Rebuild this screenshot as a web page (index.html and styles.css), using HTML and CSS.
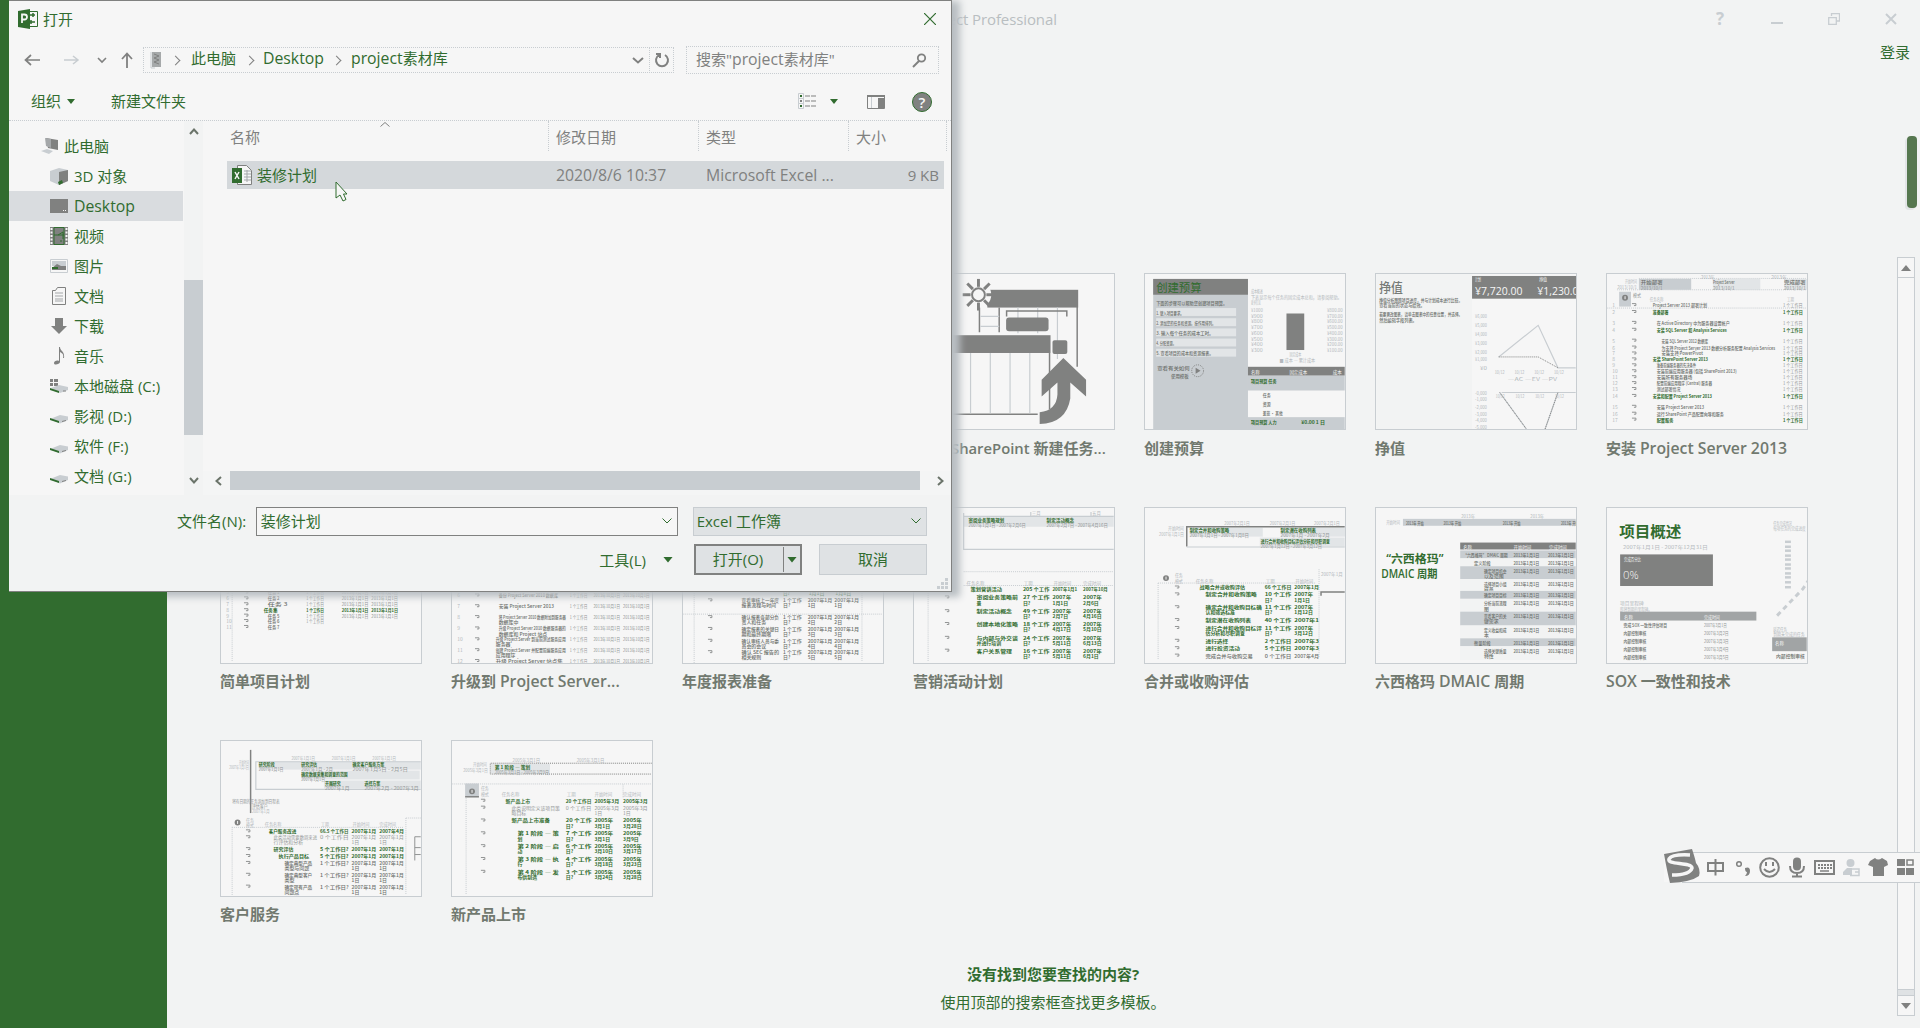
FILE: index.html
```html
<!DOCTYPE html>
<html lang="zh-CN">
<head>
<meta charset="utf-8">
<title>Project Professional</title>
<link rel="stylesheet" href="styles.css">
</head>
<body>
<div class="app">
  <aside class="rail"></aside>
  <main class="main">
    <header class="titlebar">
      <span class="app-title">Project Professional</span>
      <div class="win-buttons">
        <b class="help">?</b>
        <svg width="12" height="12"><path d="M0 10h12" stroke-width="2"/></svg>
        <svg width="12" height="12"><path d="M3.5 3V.7h8V8H8.500M.7 4.700h7.600v6.600H.7z" stroke-width="1.300"/></svg>
        <svg width="12" height="12"><path d="M1 1l10 10M11 1L1 11" stroke-width="2"/></svg>
      </div>
    </header>
    <div class="account"><span>登录</span></div>
    <div class="page-thumb"></div>
    <div class="gallery-area">
      <section class="gallery">
        <div class="grid">
          <article class="card first"><svg class="thumb" data-thumb="sharepoint"></svg><h3 class="tail"><span class="la">SharePoint</span> 新建任务...</h3></article>
          <article class="card"><svg class="thumb" data-thumb="budget"></svg><h3>创建预算</h3></article>
          <article class="card"><svg class="thumb" data-thumb="earned"></svg><h3>挣值</h3></article>
          <article class="card"><svg class="thumb" data-thumb="install"></svg><h3>安装 <span class="la">Project Server 2013</span></h3></article>
          <article class="card"><svg class="thumb" data-thumb="simple"></svg><h3>简单项目计划</h3></article>
          <article class="card"><svg class="thumb" data-thumb="upgrade"></svg><h3>升级到 <span class="la">Project Server...</span></h3></article>
          <article class="card"><svg class="thumb" data-thumb="annual"></svg><h3>年度报表准备</h3></article>
          <article class="card"><svg class="thumb" data-thumb="marketing"></svg><h3>营销活动计划</h3></article>
          <article class="card"><svg class="thumb" data-thumb="merger"></svg><h3>合并或收购评估</h3></article>
          <article class="card"><svg class="thumb" data-thumb="sigma"></svg><h3>六西格玛 <span class="la">DMAIC</span> 周期</h3></article>
          <article class="card"><svg class="thumb" data-thumb="sox"></svg><h3><span class="la">SOX</span> 一致性和技术</h3></article>
          <article class="card"><svg class="thumb" data-thumb="service"></svg><h3>客户服务</h3></article>
          <article class="card"><svg class="thumb" data-thumb="product"></svg><h3>新产品上市</h3></article>
        </div>
        <footer class="hint"><strong>没有找到您要查找的内容?</strong><span>使用顶部的搜索框查找更多模板。</span></footer>
      </section>
      <div class="scroll">
        <span class="sbtn"><svg width="10" height="6"><path d="M0 6L5 0l5 6z"/></svg></span>
        <span class="strack"></span>
        <span class="sgap"></span>
        <span class="sbtn"><svg width="10" height="6"><path d="M0 0h10L5 6z"/></svg></span>
      </div>
    </div>
  </main>
</div>

<section class="dialog">
  <header class="d-title">
    <svg width="21" height="20" viewBox="0 0 21 20"><path d="M11 2.500h8.500v15H11" fill="#f6f6f6" stroke="#316c2f"/><path d="M12 6h5M15 4v4M12 13h5M13 11v4" stroke="#316c2f" stroke-width="1.500"/><path d="M0 2L12 0v20L0 18z" fill="#316c2f"/><path d="M4 14V5.500h2.500a2.300 2.300 0 010 5H4" fill="none" stroke="#f6f6f6" stroke-width="1.800"/></svg>
    <span>打开</span>
    <svg class="close" width="12" height="12"><path d="M0 0l12 12M12 0L0 12" stroke="#316c2f" stroke-width="1.200"/></svg>
  </header>
  <div class="d-nav">
    <svg class="arrows" width="125" height="20" fill="none" stroke="#808180"><path d="M16 10H2M7 5l-5.500 5L7 15" stroke-width="1.700"/><path d="M40 10h14M49 6l5 4-5 4" stroke="#c8cdd1" stroke-width="1.500"/><path d="M74 8l4 4 4-4" stroke-width="1.600"/><path d="M103 18V4M98 9l5-5.500L108 9" stroke-width="1.800"/></svg>
    <div class="address">
      <svg width="14" height="18"><path d="M2 1h9v15H2z" fill="#a6a9aa"/><path d="M4 3l5 2-5 2 5 2-5 2 5 2" stroke="#808180" fill="none"/><path d="M1 1v16h4" stroke="#c8cdd1" fill="none"/></svg>
      <i class="chev c1"></i><span class="a1">此电脑</span>
      <i class="chev c2"></i><span class="a2 la">Desktop</span>
      <i class="chev c3"></i><span><span class="la">project</span>素材库</span>
      <svg class="drop" width="12" height="7" fill="none" stroke="#808180" stroke-width="2"><path d="M1 1l5 4.500L11 1"/></svg>
      <span class="refresh"><svg width="16" height="16" fill="none" stroke="#808180" stroke-width="2"><path d="M5 3a6 6 0 1 0 6 0M2 2h4v4"/></svg></span>
    </div>
    <div class="search"><span>搜索"<span class="la">project</span>素材库"</span><svg width="15" height="15" fill="none" stroke="#808180"><circle cx="9.500" cy="5" r="3.700" stroke-width="1.800"/><path d="M7 8l-6 6" stroke-width="2"/></svg></div>
  </div>
  <div class="d-tools">
    <span>组织</span><i class="tri"></i><span class="newf">新建文件夹</span>
    <svg class="view" width="20" height="17"><path d="M.5.500h5v5h-5zM.5 5.500h5v5h-5zM.5 10.500h5v5h-5z" fill="none" stroke="#c8cdd1"/><path d="M2 2h2v2H2zM2 12h2v2H2z" fill="#316c2f"/><path d="M2 7h2v2H2z" fill="#808180"/><path d="M7 3h11M7 8h11M7 13h11" stroke="#808180" stroke-dasharray="5 1"/></svg>
    <i class="tri t2"></i>
    <svg class="pane" width="18" height="14"><path d="M.5 1h17v12.500H.5z" fill="none" stroke="#808180"/><path d="M0 1h18" stroke="#808180" stroke-width="2"/><path d="M4.500 2v11" stroke="#c8cdd1"/><path d="M11 3h6v10h-6z" fill="#808180"/></svg>
    <span class="qmark">?</span>
  </div>
  <div class="d-body">
    <ul class="tree">
      <li class="root"><svg width="20" height="18"><path d="M5 1l12 2v10l-10-2z" fill="#808180"/><path d="M4 1l6 1v9l-5-2z" fill="#a4a7a9"/><path d="M0 14l6-2 6 2-4 3z" fill="#c8cdd1"/></svg>此电脑</li>
      <li><svg width="18" height="18"><path d="M0 4l9-3 9 2v11l-9 4-9-4z" fill="#c8cdd1"/><path d="M9 5l9-2v11l-9 4z" fill="#808180"/><path d="M8 15l4-2 1 3-4 2z" fill="#316c2f"/></svg>3D 对象</li>
      <li class="on"><svg width="18" height="18"><path d="M0 2h18v14H0z" fill="#808180"/><path d="M13 13h1v1h-1zM15 13h1v1h-1z" fill="#f6f6f6"/></svg><span class="la">Desktop</span></li>
      <li><svg width="18" height="18"><path d="M0 0h18v18H0z" fill="#808180"/><path d="M1.500 1v17M16.500 1v17" stroke="#f6f6f6" stroke-width="2" stroke-dasharray="2 1.500"/><path d="M4 .5h10v17H4zM4 8h10M8 8l5-3v7M10 14h2" stroke="#316c2f" fill="none"/></svg>视频</li>
      <li><svg width="18" height="18"><path d="M.5 2.500h17v13H.5z" fill="#f6f6f6" stroke="#c8cdd1"/><path d="M2 4h14v5H2z" fill="#c8cdd1"/><path d="M2 11l5-4 4 2h5v4H2z" fill="#808180"/><path d="M2 10h6v2H2z" fill="#316c2f"/></svg>图片</li>
      <li><svg width="18" height="18"><path d="M2.500 3.500h3l2-3h8v17h-13z" fill="#f6f6f6" stroke="#808180"/><path d="M5 6h8M5 9h8M5 12h8M5 14h8" stroke="#a4a7a9"/></svg>文档</li>
      <li><svg width="18" height="18"><path d="M5 1h8v8h4l-8 8-8-8h4z" fill="#808180"/></svg>下载</li>
      <li><svg width="18" height="18"><path d="M9 0h1c0 4 5 4 4 11h-1c1-4-1-5-3-6v10c0 2-6 4-6 1 0-2 3-3 5-2z" fill="#808180"/></svg>音乐</li>
      <li><svg width="18" height="18"><path d="M0 2h3v3H0zM4 2h4v3H4zM0 6h3v3H0zM4 6h4v3H4z" fill="#808180"/><path d="M1 11l8-3 9 2v3l-8 3z" fill="#c8cdd1"/><path d="M0 11l9 3v2l-9-3z" fill="#316c2f"/><path d="M13 14h3" stroke="#808180"/></svg>本地磁盘 (C:)</li>
      <li><svg width="18" height="18"><use href="#drive"/></svg>影视 (D:)</li>
      <li><svg width="18" height="18"><use href="#drive"/></svg>软件 (F:)</li>
      <li><svg width="18" height="18"><g id="drive"><path d="M0 12l10-4 8 1.500V13l-8 3.500z" fill="#c8cdd1"/><path d="M0 11l9 3v2l-9-3z" fill="#316c2f"/><path d="M12 14.500l4-1" stroke="#808180"/></g></svg>文档 (G:)</li>
    </ul>
    <div class="vbar">
      <svg width="10" height="7"><path d="M1 6l4-4.500L9 6"/></svg><span></span><svg width="10" height="7"><path d="M1 1l4 4.500L9 1"/></svg>
    </div>
    <div class="files">
      <svg class="sort" width="10" height="5"><path d="M.5 4.500L5 .5l4.500 4" fill="none" stroke="#808180"/></svg>
      <div class="cols"><span>名称</span><span>修改日期</span><span>类型</span><span>大小</span></div>
      <div class="file">
        <span class="fname"><svg width="20" height="20"><path d="M5.500.5h9l5 5v14h-14z" fill="#f6f6f6" stroke="#808180"/><path d="M12 6h7M12 9h7M12 12h7M12 15h7M15 5v12" stroke="#a4a7a9"/><path d="M0 3h10v15H0z" fill="#316c2f"/><path d="M3 7l4 7M7 7l-4 7" stroke="#f6f6f6" stroke-width="1.500"/></svg>装修计划</span>
        <span class="la">2020/8/6 10:37</span><span class="la">Microsoft Excel ...</span><span class="size">9 KB</span>
      </div>
      <div class="hbar"><svg width="7" height="10"><path d="M6 1L1.500 5 6 9"/></svg><span></span><svg width="7" height="10"><path d="M1 1l4.500 4L1 9"/></svg></div>
    </div>
  </div>
  <footer class="d-foot">
    <div class="line"><label>文件名(N):</label><div class="field"><span>装修计划</span><svg width="10" height="6"><path d="M.5.500L5 5 9.500.500"/></svg></div><div class="field type"><span>Excel 工作簿</span><svg width="10" height="6"><path d="M.5.500L5 5 9.500.500"/></svg></div></div>
    <div class="line btns"><span class="tools">工具(L)</span><i class="tri"></i><div class="open"><span>打开(O)</span><em><i class="tri"></i></em></div><div class="cancel">取消</div></div>
    <svg class="grip" width="12" height="12" fill="#c8cdd1"><path d="M8 0h3v3H8zM4 4h3v3H4zM8 4h3v3H8zM0 8h3v3H0zM4 8h3v3H4zM8 8h3v3H8z"/></svg>
  </footer>
</section>
<svg class="cursor" width="14" height="22"><path d="M1 1v16l4-3 3 6 3-1.500L8.500 13H12z" fill="#f6f6f6" stroke="#316c2f"/></svg>

<div class="ime">
  <svg width="268" height="38" viewBox="0 0 268 38">
    <path d="M12 5.500h256v29.500H12z" fill="#f6f6f6"/><path d="M30 5.500h238M30 35.500h238" stroke="#c8cdd1"/>
    <path d="M12 7L40 2q3 9 4 14 5 6 3 13-8 6-29 7-3-12-6-29z" fill="#808180"/>
    <path d="M38 8q-18-1-21 4c-3 6 23 3 23 9q-2 7-20 7" fill="none" stroke="#f6f6f6" stroke-width="3.500"/>
    <g fill="none" stroke="#808180" stroke-width="2"><path d="M56 16h15v8H56zM63.500 12v16.500" /><circle cx="87" cy="17" r="2.300" stroke-width="1.500"/><circle cx="117.500" cy="20.500" r="9.300"/><path d="M114 15v4M121 15v4M112 22q5.500 6 11 0"/><path d="M138 19q0 7 7 7t7-7M145 26v4M140 29.500h10"/><path d="M163 14h19v13h-19z"/><path d="M166 18h14M166 21h14" stroke-dasharray="2 1"/><path d="M168 24h9" stroke-width="1.500"/></g>
    <g fill="#808180"><path d="M93 21q5-2 5 3t-5 5q2-2 2-4-2 0-2-4z"/><rect x="141" y="10.500" width="8" height="13" rx="4"/><path d="M218 14l5-3q3 3 7 0l5 3 1 4-4 2v9h-11v-9l-5-2z"/><path d="M245 12h8v7h-8zM245 21h8v7h-8zM254 21h8v7h-8z"/></g>
    <path d="M255 13h6v5h-6z" fill="none" stroke="#808180" stroke-width="1.500"/>
    <circle cx="198.500" cy="16" r="4" fill="#c8cdd1"/><path d="M191 25l4-4h5v7h-9z" fill="#c8cdd1"/><path d="M200 22h7v6.500h-9M203 25h4" fill="none" stroke="#c8cdd1" stroke-width="1.500"/>
  </svg>
</div>
<script src="thumbs.js"></script>
</body>
</html>
```
FILE: styles.css
```css
* { box-sizing: border-box; }
body {
  margin: 0; width: 1920px; height: 1028px; overflow: hidden; position: relative;
  background: #f2f3f3; color: #316c2f;
  font: 15px/20px "Open Sans", "Noto Sans CJK SC", sans-serif;
}
svg { display: block; flex: none; }
.la { font-size: 15.800px; line-height: 1; }
.app { display: flex; height: 1028px; }
.rail { width: 167px; flex: none; background: #316c2f; }
.main { flex: 1; min-width: 0; display: flex; flex-direction: column; }
.titlebar { height: 38px; display: flex; align-items: center; justify-content: space-between; padding: 0 23px 0 753px; color: #b9bec1; }
.app-title { letter-spacing: -.1px; }
.win-buttons { display: flex; align-items: center; gap: 45px; }
.win-buttons svg { fill: none; stroke: #c8cdd1; }
.help { font-size: 17px; width: 10px; color: #c8cdd1; }
.account { height: 28px; display: flex; align-items: center; justify-content: flex-end; padding-right: 10px; }
.page-thumb { width: 10px; height: 72px; margin: 70px 3px 49px auto; border-radius: 4px; background: #56774f; box-shadow: -2px 2px 0 #e2e4e6; }
.gallery-area { flex: 1; display: flex; }
.gallery { flex: 1; min-width: 0; padding: 16px 0 0 53px; display: flex; flex-direction: column; }
.grid { display: grid; grid-template-columns: repeat(7, 202px); column-gap: 29px; grid-auto-rows: 233.500px; }
.card.first { grid-column: 4; }
.thumb { width: 202px; height: 157px; background: #f6f6f6; border: 1px solid #c8cdd1; overflow: hidden; }
.card h3 { margin: 7px 0 0; font-size: 15px; line-height: 20px; font-weight: 600; color: #71796f; white-space: nowrap; }
.card:nth-child(-n+4) h3 { margin-top: 8px; }
.card h3.tail { padding-left: 38px; }
.card h3.tail .la { font-size: 14.800px; }
.hint { display: flex; flex-direction: column; align-items: center; gap: 8px; width: 1666px; margin-top: -10px; }
.hint strong { font-weight: 700; font-size: 15px; }
.scroll { flex: none; width: 18px; height: 759px; margin-right: 5px; border: 1px solid #c8cdd1; background: #f6f6f6; display: flex; flex-direction: column; }
.sbtn { height: 19px; display: flex; align-items: center; justify-content: center; fill: #808180; }
.strack { flex: 1; border: solid #c8cdd1; border-width: 1px 0; }
.sgap { height: 6px; background: #dfe2e4; border-bottom: 1px solid #c8cdd1; }

/* thumbnail drawing */
.thumb text { font: 5px "Noto Sans CJK SC", sans-serif; fill: #939797; dominant-baseline: central; }
.thumb text.b { font-weight: 700; fill: #316c2f; }
.thumb text.m { font-weight: 500; fill: #6c706c; }
.thumb text.l { fill: #b4b9bd; }
.thumb text.w { fill: #f6f6f6; }
.thumb text.t { font-size: 13px; font-weight: 500; fill: #777b77; }
.thumb text.g { font-size: 15.500px; font-weight: 700; fill: #316c2f; }
.thumb text.g.thin { font-size: 12px; font-weight: 400; }
.thumb text.s { font-size: 12px; font-weight: 600; fill: #316c2f; font-family: "Open Sans", "Noto Sans CJK SC", sans-serif; }
.thumb text.n { font-size: 11.500px; fill: #f6f6f6; font-family: "Open Sans", sans-serif; }
.thumb text.n.thin { font-weight: 300; }
.thumb .d { fill: #808180; }
.thumb .c { fill: #c8cdd1; }
.thumb .h { fill: #e2e5e7; }
.thumb .x { fill: #f2f3f3; }
.thumb .ld { fill: none; stroke: #808180; stroke-width: 1.500; }
.thumb .mk { fill: none; stroke: #909292; stroke-width: 1; }
.thumb .lc { fill: none; stroke: #c8cdd1; stroke-width: 1.200; }
.thumb .dot { fill: none; stroke: #c8cdd1; stroke-dasharray: 1 1; }
.thumb .dd { fill: none; stroke: #808180; stroke-dasharray: 1 1; }

/* file dialog */
.dialog { position: absolute; left: 9px; top: 0; width: 943px; height: 592px; background: #f6f6f6; border: 1px solid #808180; border-left: 0; box-shadow: 6px 3px 7px 2px #b9bfc3; display: flex; flex-direction: column; clip-path: polygon(0 0, 970px 0, 970px 615px, 158px 615px, 158px 592px, 0 592px); }
.d-title { height: 36px; padding: 0 15px 0 9px; display: flex; align-items: center; gap: 4px; }
.d-title span { flex: 1; }
.d-nav { height: 46px; display: flex; align-items: center; padding: 0 12px 0 15px; color: #316c2f; }
.arrows { width: 119px; }
.address { width: 531px; height: 26px; border: 1px dotted #c8cdd1; display: flex; align-items: center; padding-left: 6px; white-space: nowrap; }
.address > span { line-height: 22px; margin-top: -4px; }
.chev { width: 7px; height: 7px; border: solid #808180; border-width: 1.500px 1.500px 0 0; transform: rotate(45deg); flex: none; }
.c1 { margin: 0 12px 0 8px; }
.c2 { margin: 0 10px 0 9px; }
.c3 { margin: 0 11px 0 8px; }
.a1 { width: 46px; }
.a2 { width: 62px; }
.drop { margin-left: auto; margin-right: 5px; }
.address > .refresh { width: 24px; height: 26px; margin: 0; border-left: 1px dotted #c8cdd1; display: flex; align-items: center; justify-content: center; }
.search { width: 253px; height: 28px; margin-left: 12px; border: 1px dotted #c8cdd1; color: #808180; display: flex; align-items: center; justify-content: space-between; padding: 0 11px 0 9px; }
.search > span { margin-top: -2px; }
.d-tools { height: 38px; padding: 0 19px 0 22px; display: flex; align-items: center; border-bottom: 1px dotted #c8cdd1; }
.d-tools > span:not(.qmark) { margin-top: -2px; }
.tri { width: 8px; height: 5px; background: #316c2f; clip-path: polygon(0 0, 100% 0, 50% 100%); flex: none; }
.d-tools .tri { margin-left: 6px; }
.newf { margin-left: 36px; }
.view { margin-left: auto; }
.d-tools .t2 { margin: 0 29px 0 12px; }
.qmark { margin-left: 27px; width: 20px; height: 20px; border-radius: 50%; border: 1px solid #316c2f; background: #808180; color: #f6f6f6; text-align: center; line-height: 18px; font-weight: 600; }
.d-body { height: 374px; display: flex; }
.tree { width: 175px; margin: 0; padding: 10px 0 0; list-style: none; }
.tree li { height: 30px; width: 174px; display: flex; align-items: center; gap: 6px; padding-left: 41px; white-space: nowrap; }
.tree li.root { padding-left: 32px; gap: 3px; }
.tree li.on { background: #d9dcdf; }
.tree .la, .file .la { margin-top: 2px; }
.vbar { width: 19px; background: #f2f3f3; display: flex; flex-direction: column; align-items: center; padding: 7px 0 11px; }
.vbar svg, .hbar svg { fill: none; stroke: #6b746a; stroke-width: 2; }
.vbar span { width: 19px; height: 155px; margin: 145px 0 auto; background: #c8cdd1; }
.files { flex: 1; display: flex; flex-direction: column; position: relative; }
.sort { position: absolute; left: 177px; top: 1px; }
.cols { display: grid; grid-template-columns: 346px 150px 150px 98px; height: 32px; color: #808180; }
.cols span { border-right: 1px dotted #c8cdd1; padding: 6px 0 0 7px; margin-bottom: 2px; }
.cols span:first-child { padding-left: 27px; }
.file { margin: 8px 0 0 24px; width: 717px; height: 28px; background: #d4d8db; color: #808180; display: grid; grid-template-columns: 329px 150px 150px 83px; align-items: center; }
.fname { display: flex; align-items: center; gap: 5px; padding-left: 5px; color: #316c2f; }
.size { text-align: right; }
.hbar { margin-top: auto; height: 24px; display: flex; align-items: center; padding: 0 7px 5px 12px; background: #f4f5f5; justify-content: space-between; }
.hbar span { height: 19px; width: 690px; margin-right: 10px; margin-left: 1px; background: #c8cdd1; }
.d-foot { flex: 1; background: #f2f3f3; padding: 11px 24px 0 168px; position: relative; }
.line { display: flex; align-items: center; height: 30px; }
.line label { width: 79px; }
.field { width: 423px; height: 29px; background: #f6f6f6; border: 1px solid #808180; display: flex; align-items: center; justify-content: space-between; padding: 0 5px 0 4px; }
.field svg { fill: none; stroke: #316c2f; }
.field.type { width: 235px; margin-left: 15px; padding-left: 3px; background: #dfe2e4; border-color: #c8cdd1; }
.btns { margin-top: 8px; height: 31px; justify-content: flex-end; }
.tools { margin-right: 17px; }
.open { margin-left: 21px; width: 108px; height: 31px; border: 2px solid #808180; background: #dfe2e4; display: flex; }
.open span { flex: 1; text-align: center; line-height: 27px; padding-right: 3px; }
.open em { width: 17px; margin: 1px 0; border-left: 1px solid #808180; display: flex; align-items: center; justify-content: center; }
.open .tri, .btns > .tri { width: 10px; height: 6px; }
.cancel { margin-left: 17px; width: 108px; height: 31px; background: #dfe2e4; border: 1px solid #c8cdd1; text-align: center; line-height: 29px; }
.grip { position: absolute; right: 2px; bottom: 1px; }
.cursor { position: absolute; left: 335px; top: 181px; }
.ime { position: absolute; left: 1652px; top: 847px; width: 268px; height: 38px; }
```
FILE: thumbs.js
```js
// Draws the template previews; all coordinates are in preview pixels.
const r = (x, y, w, h, c = "c", rx = 0) => `<rect x="${x}" y="${y}" width="${w}" height="${h}" rx="${rx}" class="${c}"/>`;
const p = (d, c = "lc") => `<path d="${d}" class="${c}"/>`;
const t = (x, y, s, w, c = "") => `<text x="${x}" y="${y}" class="${c}"${w ? ` textLength="${w}" lengthAdjust="spacingAndGlyphs"` : ""}>${s}</text>`;
const each = (a, f) => a.map(f).join("");
const mark = (x, y) => p(`M${x - 2} ${y - 1}h4v2h-2`, "mk");
const info = (x, y) => `<circle cx="${x}" cy="${y}" r="3" class="d"/>` + r(x - .5, y - 1.500, 1, 3, "x");

// Rows of a schedule: [y, indent x, width, name, second line, duration, start, finish, class]
const plan = (rows, o) => each(rows, ([y, x, w, name, more, dur, a, b, c]) => {
  const step = o.step || 5.3;
  const col = (cx, s, cw) => each(s.split("|"), (v, i) => t(cx, y + i * step, v, i ? 0 : cw, c));
  return mark(o.icon, y) + t(x, y, name, w, c) + (more ? t(x, y + step, more, 0, c) : "") +
    col(o.dur, dur, o.dw) + col(o.start, a, a.includes("|") && !a.includes("月|") ? 19 : 25) +
    (o.end ? col(o.end, b, b.includes("|") && !b.includes("月|") ? 19 : 25) : "");
});

const thumbs = {
  sharepoint() {
    const rays = each([0, 45, 90, 135, 180, 225, 270, 315], a => `<path d="M65 13V5" transform="rotate(${a} 65 21)" class="ld" style="stroke-width:3"/>`);
    return r(74, 16, 92, 18, "d") + p("M165 20v74", "ld") + p("M66 34v25M86 34v25", "ld") + p("M67 43h19M67 53h19M105 34v26M125 34v26M145 34v52") +
      p("M93.500 43v-5.500h61V43", "ld") + r(93, 44, 43, 14, "d", 3) + r(0, 62, 138, 18, "d") + r(140, 67, 15, 14, "d", 2) +
      p("M137 80v57M0 142h125", "ld") + p("M57 80v61M77 80v61M97 80v61M117 80v61") +
      `<circle cx="65" cy="21" r="13" fill="#f6f6f6"/>` + rays + `<circle cx="65" cy="21" r="6.500" class="ld" style="stroke-width:2;fill:#f6f6f6"/>` +
      p("M151 85L174 107v17l-16-14v16q-4 25-31 26v-12q17-2 18-18v-12l-16 14v-17z", "d");
  },
  budget() {
    const items = [["1. 键入项目要求。", 28], ["2. 添加您的任务和资源。按作用排列。", 60], ["3. 输入每个任务的成本工时。", 58], ["4. 分配资源。", 20], ["5. 查看项目的成本和资源报表。", 58]];
    return r(8, 5, 96, 152) + r(8, 5, 96, 16, "d") + t(11, 13, "创建预算", 46, "g thin") +
      t(11, 28.500, "下面的步骤可以帮助您创建项目预算。", 72, "m") +
      each(items, ([s, w], i) => r(11, 34.500 + i * 10.300, 81, 8, "h") + t(11, 38.500 + i * 10.300, s, w, "m")) +
      t(12, 95, "查看有关如何", 33, "m") + t(26, 103, "使用模板", 18, "m") + `<circle cx="53" cy="98" r="6" class="dd"/><path d="M51 95l5 3-5 3z" class="d"/>` +
      t(107, 17, "成本概述", 12, "l") + t(107, 22.500, "下表显示每个任务的固定成本总和，请参阅帮助。", 92, "l") + t(107, 28, "更多信息", 10, "l") +
      each([...Array(8).keys()], i => t(107, 36 + i * 5.800, "¥" + (10 - i) + "00", 12, "l") + t(184, 36 + i * 5.800, "¥" + (8 - i) + "00.00", 16, "l")) +
      r(143, 40, 18, 37, "d") + t(146, 81, "固定成本", 12, "l") + t(136, 87, "■ 成本 — 累计成本", 36, "l") +
      r(104, 94, 98, 9, "d") + t(107, 98.500, "名称", 9, "w") + t(146, 98.500, "固定成本", 18, "w") + t(190, 98.500, "成本", 9, "w") +
      r(104, 103, 98, 15) + t(107, 108, "项目预算 任务", 26, "b") + t(119, 122, "任务", 8, "m") + t(119, 131, "资源", 8, "m") + t(119, 140, "差旅 · 其他", 20, "m") +
      r(104, 145, 98, 12) + t(107, 149, "项目预算 人力", 26, "b") + t(158, 149, "¥0.00 1 日", 24, "b");
  },
  earned() {
    return r(0, 0, 97, 157, "x") + t(3, 13, "挣值", 24, "t") + t(3, 25.500, "挣值分析跟踪项目进度，并与计划成本进行比较。", 84, "m") + t(3, 31, "查看当前的状态与绩效。", 46, "m") +
      t(3, 40.500, "若要更改图表，请单击图表中的任意位置，并选择。", 84, "m") + t(3, 46, "然后编辑字段列表。", 38, "m") + r(97, 2, 106, 23, "d") +
      t(100, 5, "计划", 6, "w") + t(165, 5, "挣值", 8, "w") + t(100, 16.500, "¥7,720.00", 48, "n") + t(163, 16.500, "¥1,230.00", 48, "n") +
      each([42, 51, 60, 69, 78, 86], (y, i) => t(100, y, "¥" + (6 - i) + ",000", 12, "l")) + t(105, 95, "¥0", 7, "l") +
      p("M124 84L164 52 184 95h18M127 120h75") + p("M124 84h40l20 11", "dd") + p("M125 120l27 37M171 157l13-37", "lc") + p("M125 120l27 37M171 157l13-37", "dd") +
      each([120, 140, 160, 180], x => t(x, 99, "10/12", 10, "l") + t(x + 1, 123.500, "10/12", 9, "l")) + t(133, 106, "—AC —EV —PV", 50, "l") +
      each([120, 126, 134, 141, 147, 154], (y, i) => t(100, y, "-" + i + ",000", 12, "l"));
  },
  install() {
    const rows = [[31, 46, 55, "Project Server 2013 部署计划"], [38, 46, 16, "准备部署", 1], [49, 50, 74, "在 Active Directory 中为服务器设置帐户"], [56, 50, 71, "安装 SQL Server 和 Analysis Services", 1], [67, 55, 47, "安装 SQL Server 2012 数据库"], [74, 55, 115, "为支持 Project Server 2013 数据分析服务配置 Analysis Services"], [80, 55, 42, "安装支持 PowerPivot"], [86, 46, 56, "安装 SharePoint Server 2013", 1], [92, 50, 40, "准备前端服务器的先决条件"], [98, 50, 81, "安装前端应用服务器 (包括 SharePoint 2013)"], [104, 50, 36, "安装所有服务器场"], [110, 50, 56, "配置前端应用程序 (Central) 服务器"], [116, 50, 24, "测试部署情况"], [123, 46, 60, "安装和配置 Project Server 2013", 1], [134, 50, 48, "安装 Project Server 2013"], [141, 50, 68, "运行 SharePoint 产品配置向导和服务"], [147, 50, 17, "配置服务", 1]];
    return r(32, 5, 53, 11) + r(107, 5, 48, 11, "h") + r(179, 5, 25, 11, "h") + p("M32 4.500h170M10 16h192", "dot") +
      each([[34, "开始部署"], [107, "Project Server"], [179, "完成部署"]], ([x, s]) => t(x, 7.800, s, 22, "m") + t(x, 13.300, "2013/10/1", 22)) +
      t(95, 2.200, "2013年", 14, "l") + t(166, 2.200, "2013年", 16, "l") + t(18, 7, "开始时间", 12, "l") + t(10, 12.500, "2013/10/1", 20, "l") +
      r(12, 18, 12, 15) + info(18, 24) + t(26, 21, "模式", 8) + t(43, 24.500, "任务名称", 14, "l") + t(182, 24.500, "工期", 7, "l") + p("M0 34.500h202", "dot") +
      each(rows, ([y, x, w, s, b], i) => t(5, y, i + 1, 0, "l") + mark(27, y) + t(x, y, s, w, b ? "b" : "m") + t(178, y, "1 个工作日", 20, b ? "b" : ""));
  },
  simple() {
    return p("M11 84v72", "dot") + each([[85, 12], [91, 12], [97, 20], [103, 14], [108.500, 12], [114, 12], [120, 12]], ([y, w], i) => t(5, y, i + 5, 0, "l") + mark(25, y) + t(i == 3 ? 43 : 47, y, i == 3 ? "任务集" : "任务 " + (i + 1), w, i == 3 ? "b" : "m") +
      (i < 6 ? t(86, y, "1 个工作日", 18, i == 3 ? "b" : "") : "") + (i < 5 ? t(122, y, "2013年1月1日", 27, i == 3 ? "b" : "") + t(152, y, "2013年1月1日", 27, i == 3 ? "b" : "") : ""));
  },
  upgrade() {
    const rows = [[88, 47, 60, "备份 Project Server 2010 数据库"], [99, 47, 56, "安装 Project Server 2013"], [110, 47, 68, "将 Project Server 2010 数据附加到服务器", "数据库中"], [121.500, 47, 68, "升级 Project Server 2010 数据服务器的", "数据库和 Project 站点"], [132.500, 44, 71, "升级 Project Server 到当前测试服务应用", "服务器"], [143.500, 44, 71, "创建 Project Server 并配置前端服务应用", "应用程序"], [154.500, 44, 68, "升级 Project Server 站点集"]];
    return each(rows, ([y, x, w, s, m], i) => t(5, y, i + 6, 0, "l") + mark(25, y) + t(x, y, s, w, "m") + (m ? t(x, y + 5.200, m, 0, "m") : "") + t(119, y, "1 个工作日", 18) + t(143, y, "2013年10月1日", 27) + t(173, y, "2013年10月1日", 27));
  },
  annual() {
    const o = { icon: 27, dur: 101, dw: 19, start: 126, end: 153, step: 5.2 };
    return p("M11 84v73M0 107.500h202M181 84v72", "dot") + t(101, 86, "日?", 7, "b") + t(127, 86, "1月1日", 16, "b") + t(154, 86, "1月8日", 16, "b") +
      plan([[93, 59, 38, "查看审核上一年度", "报表流程与时间", "1 个工作|日?", "2007年1月|1日", "2007年1月|1日", "m"], [110, 59, 38, "确认报表各部分负", "责人和任务", "1 个工作|日?", "2007年1月|2日", "2007年1月|2日", "m"], [122, 59, 38, "确定报表的关键日", "期和最终期限", "1 个工作|日?", "2007年1月|3日", "2007年1月|3日", "m"], [134, 59, 38, "确认审核人员与委", "员会的会议", "1 个工作|日?", "2007年1月|4日", "2007年1月|4日", "m"], [145.500, 59, 38, "确认 SEC 报告的", "相关规则", "1 个工作|日?", "2007年1月|5日", "2007年1月|5日", "m"]], o);
  },
  marketing() {
    const o = { icon: 33, dur: 110, dw: 27, start: 140, end: 171 };
    return r(50, 9, 152, 10, "h") + p("M202 42H50V5M50 8.500h152M118 4v5M179 4v5") + t(119, 4.500, "三月", 9, "l") + t(180, 4.500, "五月", 9, "l") +
      t(55, 11.500, "审阅业务策略规划", 36, "b") + t(55, 17, "2007年1月1日 - 2007年2月6日", 58) + t(134, 11.500, "制定活动概念", 28, "b") + t(134, 17, "2007年2月7日 - 2007年4月16日", 62) +
      p("M50 64.500h152M14 84v72M50 78.500h152", "dot") + t(53, 75, "任务名称", 18, "l") + t(111, 75, "工期", 9, "l") + t(141, 75, "开始时间", 18, "l") + t(171, 75, "完成时间", 18, "l") +
      plan([[82, 57, 32, "策划营销活动", "", "205 个工作", "2007年1月1", "2007年10月", "b"], [90, 63, 42, "审阅业务策略前", "景", "27 个工作|日?", "2007年|1月1日", "2007年|2月6日", "b"], [104, 63, 36, "制定活动概念", "", "49 个工作|日?", "2007年|2月7日", "2007年|4月16日", "b"], [117, 63, 42, "创建本地化策略", "", "18 个工作|日?", "2007年|4月17日", "2007年|5月10日", "b"], [131, 63, 42, "与内部与外交谈", "并进行培训", "24 个工作|日?", "2007年|5月11日", "2007年|6月13日", "b"], [144, 63, 36, "客户关系管理", "", "16 个工作|日?", "2007年|5月11日", "2007年|6月1日", "b"]], o);
  },
  merger() {
    const o = { icon: 32, dur: 121, dw: 27, start: 151, end: 0 };
    return r(45, 20, 74, 9, "h") + r(137, 20, 66, 9, "h") + r(116, 30, 86, 9, "h") + p("M42 39V19h160", "ld") + p("M42 39.500h160") +
      each([80, 126, 171], x => t(x, 15, "2007年2月1日", 26, "l")) + t(23, 20, "开始时间", 16, "l") + t(14, 25.500, "2007年1月1日", 25, "l") +
      t(45, 21.500, "制定合并和收购策略", 40, "b") + t(45, 27, "2007年1月1日 - 2007年1月8日", 60) + t(137, 21.500, "制定潜在收购列表", 36, "b") + t(137, 27, "2007年1月 - 2007年2月", 50) + t(117, 32.500, "进行合并和收购目标评估分析和尽职调查", 70, "b") + t(117, 38, "2007年1月12日 - 2007年3月12日", 62) +
      info(21, 71) + t(30, 67.500, "任务", 8, "l") + t(30, 73, "模式", 8, "l") + t(51, 73, "任务名称", 18, "l") + t(122, 73, "工期", 9, "l") + t(152, 73, "开始时间", 18, "l") + p("M13 76v78M176 62v90M13 76h160", "dot") + t(178, 66, "2007年1月", 22, "l") + p("M202 85h-24v4", "ld") +
      plan([[80, 55, 46, "战略合并或收购评估", "", "66 个工作日", "2007年1月", "", "b"], [87, 61, 52, "制定合并和收购策略", "", "10 个工作|日?", "2007年|1月1日", "", "b"], [100, 61, 57, "确定合并和收购目标确", "认和筛选标准", "11 个工作|日?", "2007年|1月12日", "", "b"], [113, 61, 46, "制定潜在收购列表", "", "40 个工作", "2007年1", "", "b"], [121, 61, 57, "进行合并和收购目标评", "估分析和尽职调查", "11 个工作|日?", "2007年|3月12日", "", "b"], [134, 61, 23, "进行选择", "", "2 个工作日", "2007年3", "", "b"], [141.500, 61, 35, "进行投资活动", "", "5 个工作日", "2007年3", "", "b"], [149, 61, 48, "完成合并与收购交易", "", "0 个工作日", "2007年4月", "", "m"]], o);
  },
  sigma() {
    const rows = [[43, 8, 0, "“六西格玛” DMAIC 周期"], [51, 8, 5, "定义阶段"], [59, 13, 15, "确定项目机会", "以及范围"], [72, 12, 15, "选择项目小组", "成员"], [84, 8, 15, "确定项目目标"], [92, 13, 15, "分析当前流程", "图"], [105, 14, 15, "查看客户的关", "键需求"], [119, 13, 15, "定义收益和成", "本"], [132, 8, 5, "衡量阶段"], [140, 14, 15, "选择关键质量", "特性"]];
    return r(27, 11, 175, 7) + each([30, 68, 128, 187], x => t(x, 14.500, "2013年 开始", 18, "m")) + t(10, 14, "开始时间", 14, "l") + t(86, 8, "2013年", 14, "l") + t(156, 8, "2013年", 14, "l") +
      t(10, 51, "“六西格玛”", 58, "s") + t(5, 66, "DMAIC 周期", 57, "s") + r(85, 35, 117, 7, "d") + t(88, 38.500, "名称", 9, "w") + t(139, 38.500, "开始时间", 18, "w") + t(175, 38.500, "完成时间", 18, "w") +
      each(rows, ([y, h, x, s, m], i) => r(85, y, 117, h, i % 2 ? "x" : "c") + t(88 + x + (i ? 6 : 0), y + 4, s, i ? (x < 6 ? 17 : 23) : 45, "m") + (m ? t(109, y + 9.400, m, 0, "m") : "") + t(139, y + 4, "2013年1月1日", 26, "m") + t(174, y + 4, "2013年1月1日", 26, "m"));
  },
  sox() {
    return t(12, 22, "项目概述", 63, "g") + t(16, 39.500, "2007年1月1日 - 2007年12月31日", 86, "l") + r(13, 47, 94, 32, "d") + t(17, 51.500, "完成百分比", 17, "w") +
      t(16, 67, "0%", 0, "n thin") + t(13, 96, "项目里程碑", 24, "l") + t(13, 101.500, "即将到期的里程碑。", 32, "l") + `<rect x="13" y="105" width="138" height="9" fill="#a1a4a5"/>` + t(17, 109.500, "名称", 9, "w") + t(98, 109.500, "完成时间", 16, "w") +
      t(16.500, 118, "完成 SOX 一致性评估项目", 44, "m") + each([126, 134, 142, 150.500], (y, i) => t(16.500, y, "内部控制审核", 23, "m") + t(98, y, "2007年3月" + (i + 2) + "日", 25)) + t(98, 118, "2007年3月1日", 23) +
      t(168, 14.500, "任务完成情况", 19, "l") + t(168, 20, "每项任务的完成进度", 33, "l") + each([33, 38, 42, 47, 51, 56, 60, 65, 69, 74, 79], y => r(180, y, 6, 2.500)) +
      `<path d="M172 109L198 82 206 70" class="lc" style="stroke-width:3" stroke-dasharray="5 4"/>` + t(168, 122, "延迟任务", 14, "l") + t(168, 127.500, "到期未完成的任务", 32, "l") + `<rect x="167" y="131" width="35" height="14" fill="#a1a4a5"/>` + t(170, 136, "名称", 9, "w") + t(171, 149, "内部控制审核", 29, "m");
  },
  service() {
    const o = { icon: 27, dur: 100, dw: 29, start: 132, end: 160 };
    const g = (y, name, more, c = "m") => [y, 64, 28, name, more, "1 个工作日?", "2007年1月|1日", "2007年1月|1日", c];
    return r(38, 21, 164, 8, "h") + r(81, 30, 120, 9, "h") + r(104, 40, 98, 8, "h") + p("M202 21H35v28h167") + p("M29.700 9v64", "ld") + each([71, 112, 153], x => t(x, 17, "2007年1月1日", 24, "l")) +
      t(38, 22.500, "研究阶段", 16, "b") + t(81, 22.500, "研究评估", 16, "b") + t(133, 22.500, "确定客户服务方案", 32, "b") + t(38, 27.800, "2007年1月1日", 25) + t(81, 27.800, "2007年1月 - 2月", 32) + t(133, 27.800, "2007年1月5日 - 2月5日", 56) +
      t(81, 33, "确定数据采集和调查的范围", 47, "b") + t(81, 38, "2007年1月1日", 24) + t(105, 42.500, "开展研究", 16, "b") + t(145, 42.500, "选择方案", 16, "b") + t(105, 47.500, "2007年1月", 25) + t(145, 47.500, "2007年2月 - 2007年3月", 55) + t(18, 20.500, "开始时间", 10, "l") + t(8, 26, "2007年1月1日", 20, "l") +
      t(11, 60, "将有日期的任务添加到日程表", 48) + t(31, 65, "评估客户", 16) + t(31, 70, "2007年1月", 18, "l") + info(16.500, 82.500) + t(25, 79.500, "任务", 8, "l") + t(25, 85, "模式", 8, "l") + t(44, 84, "任务名称", 17, "l") + t(101, 84, "工期", 8, "l") + t(133, 84, "开始时间", 17, "l") + t(160, 84, "完成时间", 17, "l") +
      p("M11 87v70M11 87.500h174M187 78v78M187 78h15", "dot") + p("M202 97h-6v24M196 108h6M196 115h6", "mk") +
      plan([[91, 48, 28, "客户服务改进", "", "66.5 个工作日", "2007年1月", "2007年4月", "b"], [97, 53, 44, "此类活动需要数周来进", "行评估和分析", "0 个工作日", "2007年1月|1日", "2007年1月|1日", ""], [109, 53, 20, "研究评估", "", "5 个工作日?", "2007年1月", "2007年1月", "b"], [116, 58, 31, "执行产品目标", "", "5 个工作日?", "2007年1月", "2007年1月", "b"], g(123, "确定典型产品", "类型与问题"), g(135, "确定典型客户", "类型"), g(147, "确定现有产品", "问题点")], o);
  },
  product() {
    const o = { icon: 31, dur: 115, dw: 26, start: 144, end: 173 };
    const f = (y, n, m, d, a, b) => [y, 66, 42, `第 ${n} 阶段 — ${m[0]}`, m[1], d + " 个工作|日?", "2005年|" + a, "2005年|" + b, "b"];
    return each([61, 126], x => t(x, 18.500, "2005年3月1日", 28, "l")) + r(39, 23, 60, 10, "h") + p("M202 22.500H38.500v11H202", "dd") + t(43, 25.500, "第 1 阶段 — 策划", 36, "b") + t(43, 31, "2005年3月1日 - 2005年3月9日", 55) + t(21, 23, "开始时间", 14, "l") + t(11, 28.500, "2005年3月1日", 25, "l") +
      p("M0 43.500h202M14 58v98M173 44v14", "dot") + r(13, 43, 14, 13) + p("M13 56.500h14", "ld") + info(20, 51) + t(29, 47.500, "任务", 8, "l") + t(29, 53, "模式", 8, "l") + t(50, 53, "任务名称", 18, "l") + t(116, 53, "工期", 9, "l") + t(144, 53, "开始时间", 18, "l") + t(173, 53, "完成时间", 18, "l") +
      plan([[60, 54, 25, "新产品上市", "", "20 个工作日", "2005年3月", "2005年3月", "b"], [67, 60, 49, "此类说明定义该项目策", "略目标", "0 个工作日", "2005年3月|1日", "2005年3月|1日", ""], [80, 60, 39, "新产品上市准备", "", "20 个工作|日?", "2005年|3月1日", "2005年|3月28日", "b"], f(93, 1, ["策", "划"], 7, "3月1日", "3月9日"), f(106, 2, ["启", "动"], 6, "3月10日", "3月17日"), f(119, 3, ["执", "行"], 4, "3月18日", "3月23日"), f(132, 4, ["发", "布供制造"], 3, "3月24日", "3月28日")], o);
  }
};

document.querySelectorAll("[data-thumb]").forEach(el => {
  el.setAttribute("viewBox", "0 0 202 157");
  el.innerHTML = thumbs[el.dataset.thumb]();
});
```
